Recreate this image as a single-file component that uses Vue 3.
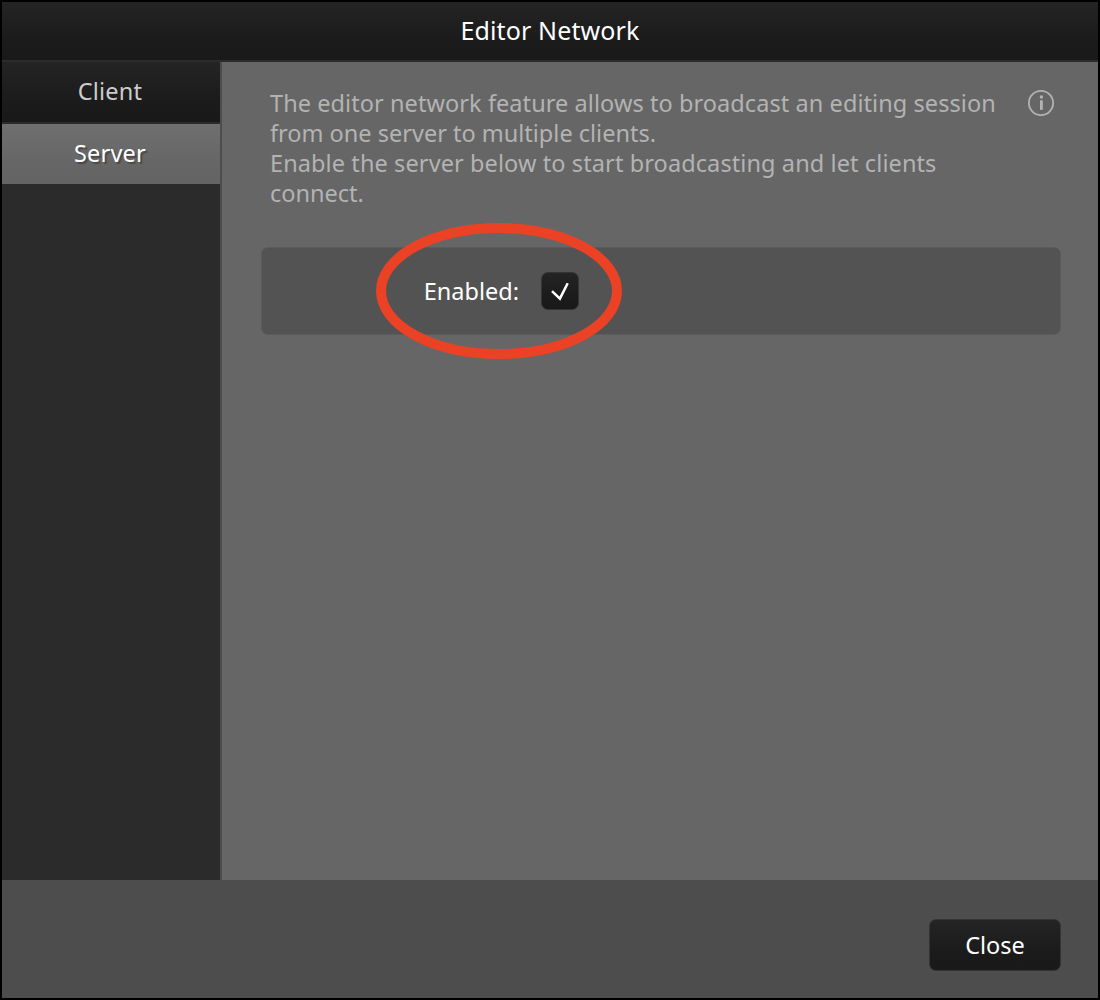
<script setup>
import { ref } from 'vue'

const tabs = ['Client', 'Server']
const active = ref('Server')
const enabled = ref(true)
const lines = [
  'The editor network feature allows to broadcast an editing session',
  'from one server to multiple clients.',
  'Enable the server below to start broadcasting and let clients',
  'connect.',
]
</script>

<template>
  <div class="dialog">
    <header class="titlebar"><span class="title">Editor Network</span></header>
    <div class="body">
      <nav class="sidebar">
        <button
          v-for="tab in tabs"
          :key="tab"
          class="tab"
          :class="[tab.toLowerCase(), { active: active === tab }]"
          @click="active = tab"
        ><span>{{ tab }}</span></button>
      </nav>
      <main class="content">
        <div class="intro">
          <p class="description">
            <span v-for="(line, i) in lines" :key="i" class="line" :class="'line-' + (i + 1)">{{ line }}</span>
          </p>
          <svg class="info" width="28" height="28" viewBox="0 0 28 28">
            <circle cx="14" cy="14" r="12.1" fill="none" stroke="#b3b3b3" stroke-width="1.8" />
            <circle cx="14.4" cy="8" r="1.7" fill="#b3b3b3" />
            <rect x="13" y="11.3" width="2.8" height="9.5" fill="#b3b3b3" />
          </svg>
        </div>
        <div class="panel">
          <span class="label"><span>Enabled:</span></span>
          <button class="checkbox" @click="enabled = !enabled">
            <svg v-if="enabled" width="36" height="36" viewBox="0 0 36 36">
              <path d="M10 18.1 L17.9 25.6 L25.7 10.2" fill="none" stroke="#fff" stroke-width="2.5" />
            </svg>
          </button>
          <svg class="highlight" width="246" height="136" viewBox="0 0 246 136">
            <ellipse cx="123" cy="68" rx="118" ry="63" fill="none" stroke="#eb4226" stroke-width="10" />
          </svg>
        </div>
      </main>
    </div>
    <footer class="footer">
      <button class="close"><span>Close</span></button>
    </footer>
  </div>
</template>

<style>
body {
  margin: 0;
}
</style>

<style scoped>
.dialog {
  box-sizing: border-box;
  width: 1100px;
  height: 1000px;
  border: 2px solid #000;
  display: flex;
  flex-direction: column;
  background: #4d4d4d;
  color: #fff;
  font: 23.5px/30px "Noto Sans", sans-serif;
}
button {
  box-sizing: border-box;
  border: 0;
  padding: 0;
  margin: 0;
  font: inherit;
  color: inherit;
  display: flex;
  align-items: center;
  justify-content: center;
}
.titlebar {
  box-sizing: border-box;
  height: 60px;
  padding-bottom: 2px;
  border-bottom: 2px solid #2c2c2c;
  background: linear-gradient(#242424, #1b1b1b 65%, #191919);
  display: flex;
  align-items: center;
  justify-content: center;
  font-size: 25px;
  letter-spacing: 0.12px;
}
.body {
  height: 818px;
  display: flex;
}
.sidebar {
  width: 218px;
  background: #2b2b2b;
  border-right: 2px solid #4d4d4d;
}
.tab {
  width: 218px;
  height: 62px;
  padding: 0 2px 2px 0;
  border-bottom: 2px solid #2b2b2b;
  background: linear-gradient(#242424, #1b1b1b 65%, #191919);
  color: #ccc;
  letter-spacing: 0.2px;
}
.tab.active {
  background: linear-gradient(#6f6f6f, #666 65%, #646464);
  color: #fff;
  text-shadow: 2px 2px 1px rgba(0, 0, 0, 0.3);
}
.content {
  flex: 1;
  background: #666;
}
.intro {
  display: flex;
  justify-content: space-between;
  padding: 26px 43px 0 48px;
  height: 160px;
  color: #b3b3b3;
}
.description {
  margin: 0;
}
.line {
  display: block;
  width: max-content;
  white-space: nowrap;
}
.line-1 {
  letter-spacing: 0.07px;
}
.line-3 {
  letter-spacing: 0.1px;
}
.info {
  margin-top: 1px;
}
.panel {
  position: relative;
  box-sizing: border-box;
  width: 800px;
  height: 88px;
  margin-left: 39px;
  margin-top: -1px;
  border: 1px solid #5b5b5b;
  border-radius: 7px;
  background: #535353;
  display: flex;
  align-items: center;
}
.label {
  width: 257px;
  display: flex;
  justify-content: flex-end;
}
.checkbox {
  width: 38px;
  height: 38px;
  margin-left: 22px;
  border: 1px solid #343434;
  border-radius: 7px;
  background: linear-gradient(#242424, #1b1b1b 65%, #191919);
}
.highlight {
  position: absolute;
  left: 114px;
  top: -25px;
}
.footer {
  height: 118px;
  display: flex;
  justify-content: flex-end;
  align-items: flex-start;
  padding: 39px 37px 0 0;
  box-sizing: border-box;
}
.close {
  width: 132px;
  height: 52px;
  border: 1px solid #343434;
  border-radius: 7px;
  background: linear-gradient(#242424, #1b1b1b 65%, #191919);
}
</style>
